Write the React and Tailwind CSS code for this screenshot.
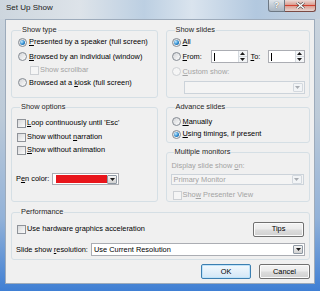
import React from "react";

// small vista-ish form bits
function Radio({ checked, disabled }) {
  return (
    <span
      className={
        disabled
          ? "flex items-center justify-center w-[9px] h-[9px] shrink-0 rounded-full border border-[#cdd0d4] bg-[#f5f5f5]"
          : "flex items-center justify-center w-[9px] h-[9px] shrink-0 rounded-full border border-[#858b93] bg-[linear-gradient(135deg,#d2d4d7,#fdfdfd)]"
      }
    >
      {checked && (
        <span className="w-[5px] h-[5px] rounded-full bg-[radial-gradient(circle_at_35%_35%,#c8ecff,#2a8ad0_55%,#0b4f8e)]" />
      )}
    </span>
  );
}

function Check({ disabled }) {
  return (
    <span
      className={
        disabled
          ? "w-[9px] h-[9px] shrink-0 border border-[#cdd0d4] bg-[#f5f5f5]"
          : "w-[9px] h-[9px] shrink-0 border border-[#8f9399] bg-[linear-gradient(135deg,#d8d9db,#fbfbfb)]"
      }
    />
  );
}

function Arrow({ disabled, up }) {
  return (
    <svg width="5" height="3" viewBox="0 0 5 3">
      <path
        d={up ? "M0 3 L2.5 0 L5 3 Z" : "M0 0 L5 0 L2.5 3 Z"}
        fill={disabled ? "#a8acb2" : "#1c1c1c"}
      />
    </svg>
  );
}

function DropBtn({ disabled }) {
  return (
    <span
      className={
        disabled
          ? "flex items-center justify-center w-[10px] h-[9px] rounded-[1px] border border-[#d3d8de] bg-[#f2f4f6]"
          : "flex items-center justify-center w-[10px] h-[9px] rounded-[1px] border border-[#8e98a3] bg-[linear-gradient(#f4f4f4,#e2e2e2_50%,#d2d2d2)]"
      }
    >
      <Arrow disabled={disabled} />
    </span>
  );
}

function Spin() {
  return (
    <div className="flex justify-between border border-[#abadb3] bg-white w-[37px] h-[13px]">
      <span className="ml-[2px] mt-[2px] w-px h-[8px] bg-black" />
      <div className="flex flex-col w-[9px] border-l border-[#d6dbe0] bg-[#f3f5f7]">
        <span className="flex flex-1 items-center justify-center border-b border-[#d6dbe0]">
          <Arrow up />
        </span>
        <span className="flex flex-1 items-center justify-center">
          <Arrow />
        </span>
      </div>
    </div>
  );
}

function Group({ title, className, children }) {
  return (
    <fieldset className={"border border-[#d5dfe5] rounded-[3px] " + className}>
      <legend className="ml-[3px] px-[1px] leading-[10px] text-[#1e1e1e]">
        {title}
      </legend>
      {children}
    </fieldset>
  );
}

function VistaButton({ children, primary }) {
  return (
    <div
      className={
        primary
          ? "flex items-center justify-center h-[15px] w-[50px] rounded-[2px] border border-[#3c7fb1] bg-[linear-gradient(#f3f9fd,#e3f0fa_50%,#d3e7f6)] shadow-[inset_0_0_0_1px_#bfe3fa]"
          : "flex items-center justify-center h-[15px] w-[51px] rounded-[2px] border border-[#707070] bg-[linear-gradient(#f3f3f3,#ebebeb_48%,#dddddd_52%,#d0d0d0)] shadow-[inset_0_0_0_1px_#fbfbfb]"
      }
    >
      {children}
    </div>
  );
}

export default function App() {
  return (
    <div className="w-[320px] h-[291px] flex flex-col overflow-hidden whitespace-nowrap text-[7.4px] leading-none text-black font-[family-name:'Liberation_Sans',Arial,sans-serif] bg-[linear-gradient(180deg,#ccd5de_0%,#bccad8_40%,#93b2d8_75%,#3f7fd4_100%)]">
      {/* title bar */}
      <div className="h-[19px] flex items-start pl-[6px] pr-[4px] bg-[linear-gradient(90deg,#cdd6de_0%,#dde3e9_25%,#bccfe2_45%,#dae4ee_60%,#b2c8df_80%,#c4d1de_100%)]">
        <span className="mt-[4px] text-[8px] text-[#1a1a1a]">Set Up Show</span>
        <div className="ml-auto flex">
          <div className="flex items-center justify-center w-[17px] h-[12px] rounded-bl-[3px] border border-t-0 border-[#6d7884] bg-[linear-gradient(#dfe4e9,#c3ccd5_50%,#aab6c2)]">
            <span className="text-[9px] font-bold text-white [text-shadow:0_0_1px_#333]">?</span>
          </div>
          <div className="flex items-center justify-center w-[31px] h-[12px] rounded-br-[3px] border border-t-0 border-l-0 border-[#7a4a44] bg-[linear-gradient(#eadcd9,#dca195_42%,#d2402f_50%,#dca195_58%,#e6d6d2)]">
            <svg width="9" height="7" viewBox="0 0 9 7">
              <path d="M1 0.5 L8 6.5 M8 0.5 L1 6.5" stroke="#4a4a4a" strokeWidth="2.6" />
              <path d="M1 0.5 L8 6.5 M8 0.5 L1 6.5" stroke="#ffffff" strokeWidth="1.4" />
            </svg>
          </div>
        </div>
      </div>

      {/* client area */}
      <div className="mx-[5px] w-[310px] h-[265px] border border-[#9dabbb] bg-[#f0f0f0] pl-[5px] pr-[4px] pt-[5px] flex flex-col">
        <div className="flex gap-[8px]">
          {/* left column */}
          <div className="w-[147px] flex flex-col">
            <Group title="Show type" className="pl-[6px] pb-[8px]">
              <div className="h-[14px] flex items-center gap-[2px]">
                <Radio checked />
                <span><u>P</u>resented by a speaker (full screen)</span>
              </div>
              <div className="h-[15px] flex items-center gap-[2px]">
                <Radio />
                <span><u>B</u>rowsed by an individual (window)</span>
              </div>
              <div className="h-[12px] flex items-center gap-[1px] pl-[12px] text-[#a3a3a3]">
                <Check disabled />
                <span>Show scrollbar</span>
              </div>
              <div className="h-[13px] flex items-center gap-[2px]">
                <Radio />
                <span>Browsed at a <u>k</u>iosk (full screen)</span>
              </div>
            </Group>

            <Group title="Show options" className="mt-[4px] pl-[5px] pb-[16px]">
              <div className="mt-[4px] h-[14px] flex items-center gap-[1px]">
                <Check />
                <span><u>L</u>oop continuously until 'Esc'</span>
              </div>
              <div className="h-[14px] flex items-center gap-[1px]">
                <Check />
                <span>Show without <u>n</u>arration</span>
              </div>
              <div className="h-[12px] flex items-center gap-[1px]">
                <Check />
                <span><u>S</u>how without animation</span>
              </div>
              <div className="mt-[17px] h-[12px] flex items-center -ml-[1px]">
                <span className="w-[36px]">P<u>e</u>n color:</span>
                <div className="flex items-center justify-between w-[67px] h-[12px] border border-[#abadb3] bg-white pl-[3px] pr-[1px]">
                  <span className="w-[52px] h-[8px] bg-[#e8151b]" />
                  <DropBtn />
                </div>
              </div>
            </Group>
          </div>

          {/* right column */}
          <div className="w-[145px] flex flex-col">
            <Group title="Show slides" className="pl-[5px] pb-[3px]">
              <div className="h-[14px] flex items-center gap-[2px]">
                <Radio checked />
                <span><u>A</u>ll</span>
              </div>
              <div className="h-[15px] flex items-center">
                <Radio />
                <span className="ml-[2px] w-[28px]"><u>F</u>rom:</span>
                <Spin />
                <span className="ml-[3px] w-[17px]"><u>T</u>o:</span>
                <Spin />
              </div>
              <div className="h-[15px] flex items-center gap-[2px] text-[#a3a3a3]">
                <Radio disabled />
                <span><u>C</u>ustom show:</span>
              </div>
              <div className="mt-[2px] ml-[12px] w-[121px] h-[13px] flex items-center justify-end pr-[1px] border border-[#ccd3da] bg-[#f4f4f4]">
                <DropBtn disabled />
              </div>
            </Group>

            <Group title="Advance slides" className="mt-[4px] pl-[5px] pb-[2px]">
              <div className="mt-[3px] h-[13px] flex items-center gap-[2px]">
                <Radio />
                <span><u>M</u>anually</span>
              </div>
              <div className="h-[12px] flex items-center gap-[2px]">
                <Radio checked />
                <span><u>U</u>sing timings, if present</span>
              </div>
            </Group>

            <Group title="Multiple monitors" className="mt-[4px] pl-[4px] text-[#a3a3a3]">
              <div className="mt-[3px] h-[12px] flex items-center pl-[1px]">
                <span>Display slide show <u>o</u>n:</span>
              </div>
              <div className="mt-[2px] w-[133px] h-[11px] flex items-center justify-between pl-[2px] pr-[1px] border border-[#ccd3da] bg-[#f4f4f4]">
                <span>Primary Monitor</span>
                <DropBtn disabled />
              </div>
              <div className="mt-[4px] h-[12px] flex items-center gap-[1px] pl-[2px]">
                <Check disabled />
                <span>Sho<u>w</u> Presenter View</span>
              </div>
            </Group>
          </div>
        </div>

        {/* performance */}
        <Group title="Performance" className="mt-[5px] w-[299px] pl-[5px] pr-[4px] pb-[3px]">
          <div className="mt-[5px] h-[14px] flex items-center justify-between pr-[1px]">
            <div className="flex items-center gap-[1px]">
              <Check />
              <span>Use hardware graphics acceleration</span>
            </div>
            <VistaButton>Tips</VistaButton>
          </div>
          <div className="mt-[7px] h-[13px] flex items-center -ml-[1px]">
            <span className="w-[75px] shrink-0">Slide show <u>r</u>esolution:</span>
            <div className="flex-1 h-[13px] flex items-center justify-between pl-[2px] pr-[1px] border border-[#abadb3] bg-white">
              <span>Use Current Resolution</span>
              <DropBtn />
            </div>
          </div>
        </Group>

        <div className="mt-[4px] flex justify-end gap-[8px]">
          <VistaButton primary>OK</VistaButton>
          <VistaButton>Cancel</VistaButton>
        </div>
      </div>
    </div>
  );
}
